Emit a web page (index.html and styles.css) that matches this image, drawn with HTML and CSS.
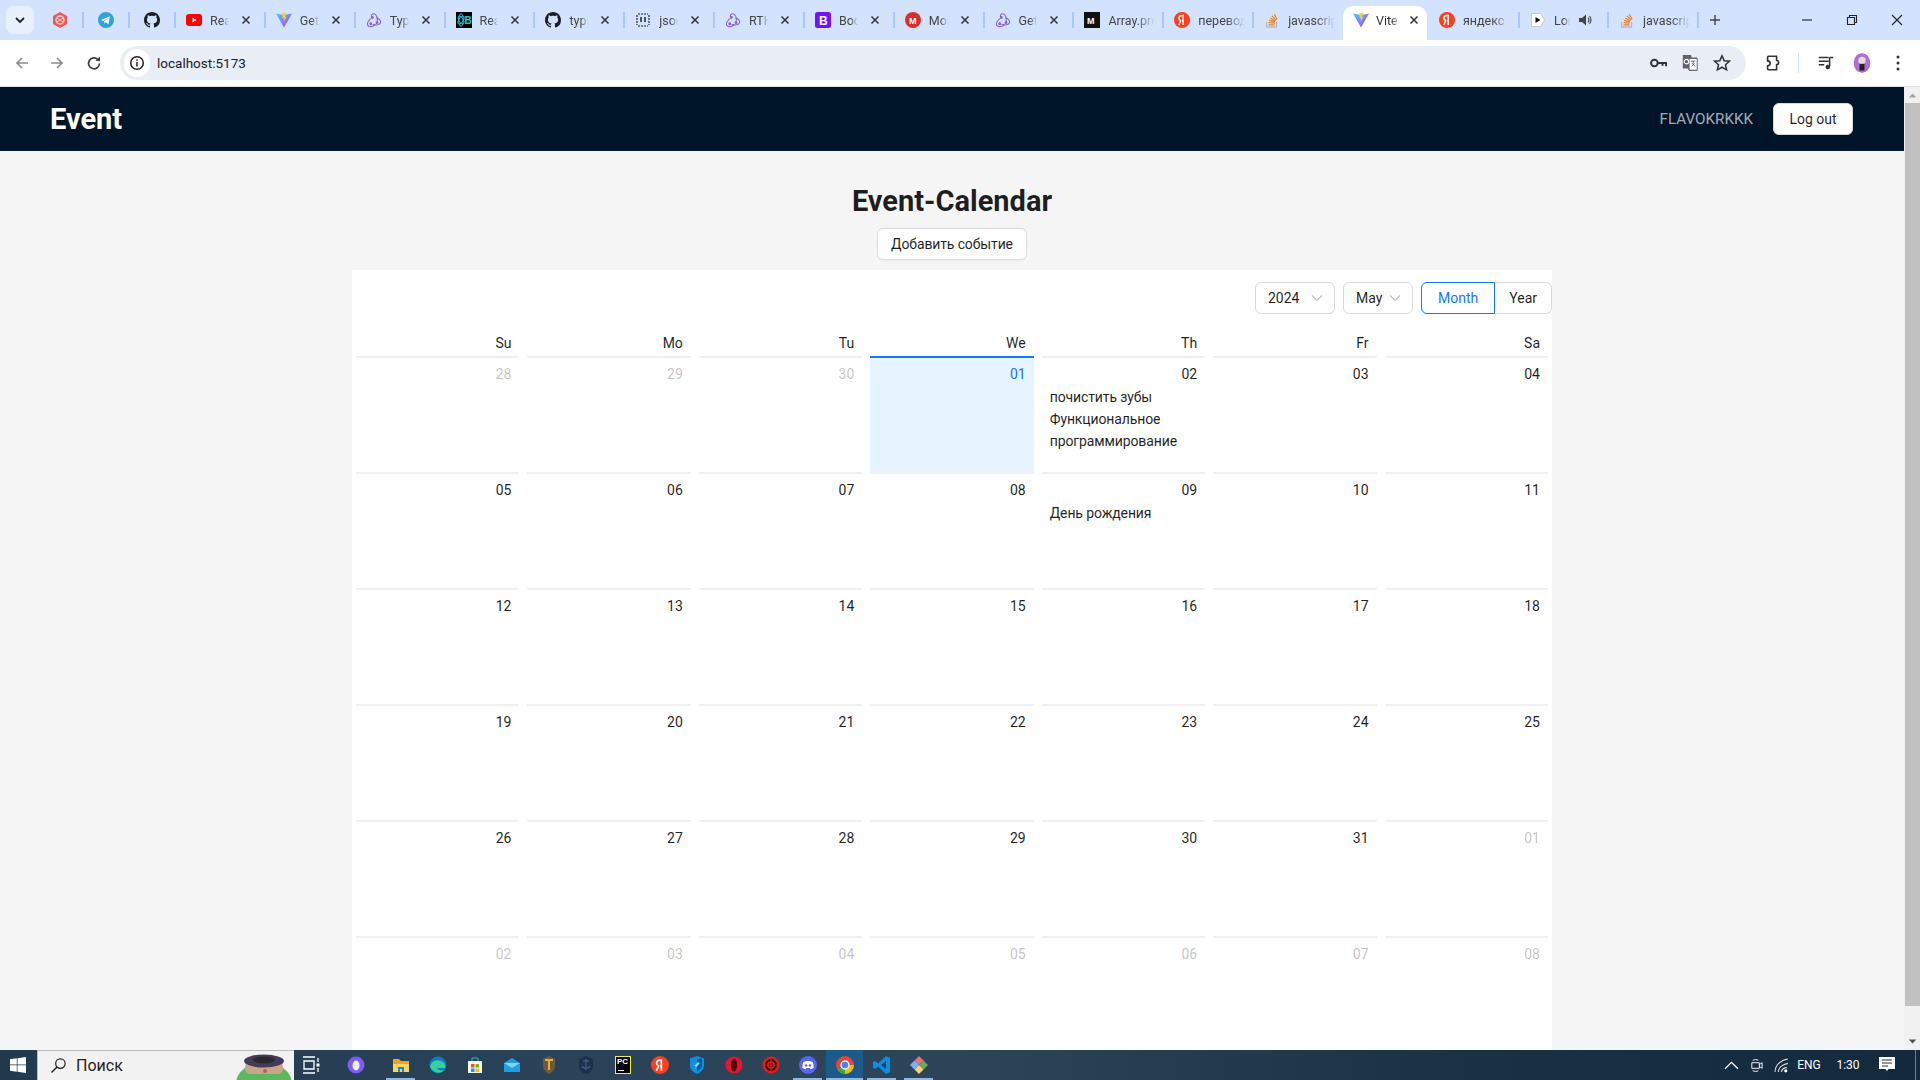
FILE: index.html
```html
<!DOCTYPE html>
<html lang="ru">
<head>
<meta charset="utf-8">
<title>Vite + React + TS</title>
<link rel="stylesheet" href="styles.css">
</head>
<body>
<svg class="defs" width="0" height="0" aria-hidden="true">
  <defs>
    <linearGradient id="vg" x1="0" y1="0" x2="1" y2="1"><stop offset="0" stop-color="#41d1ff"/><stop offset="1" stop-color="#bd34fe"/></linearGradient>
    <symbol id="x" viewBox="0 0 10 10"><path d="M1.5 1.5l7 7M8.5 1.5l-7 7" stroke="#333" stroke-width="1.5" fill="none"/></symbol>
    <symbol id="gh" viewBox="0 0 16 16"><path fill="#1b1f24" d="M8 0C3.58 0 0 3.58 0 8c0 3.54 2.29 6.53 5.47 7.59.4.07.55-.17.55-.38 0-.19-.01-.82-.01-1.49-2.01.37-2.53-.49-2.69-.94-.09-.23-.48-.94-.82-1.13-.28-.15-.68-.52-.01-.53.63-.01 1.08.58 1.23.82.72 1.21 1.87.87 2.33.66.07-.52.28-.87.51-1.07-1.78-.2-3.64-.89-3.64-3.95 0-.87.31-1.59.82-2.15-.08-.2-.36-1.02.08-2.12 0 0 .67-.21 2.2.82.64-.18 1.32-.27 2-.27.68 0 1.36.09 2 .27 1.53-1.04 2.2-.82 2.2-.82.44 1.1.16 1.92.08 2.12.51.56.82 1.27.82 2.15 0 3.07-1.87 3.75-3.65 3.95.29.25.54.73.54 1.48 0 1.07-.01 1.93-.01 2.2 0 .21.15.46.55.38A8.013 8.013 0 0016 8c0-4.42-3.58-8-8-8z"/></symbol>
    <symbol id="vite" viewBox="0 0 16 16"><path fill="url(#vg)" d="M0 1.5l8 1.5 8-1.5L8 15.5z"/><path fill="#ffd028" d="M10.5.2L6.2 1.2l.5 5.2 1.4-.4-.5 3.6 3-5-1.7.3z"/></symbol>
    <symbol id="redux" viewBox="0 0 16 16"><g fill="none" stroke="#8b63c9" stroke-width="1.1"><path d="M11.2 9.7C12 6.6 10.6 2 8 1.7 6 1.5 4.8 3.4 5.6 5.4"/><path d="M4.7 6.7C2.2 9.2 .6 11.7 1.8 13.4c1.3 1.9 5 1.6 7.6-.7"/><path d="M6.6 12.4c3 .9 6.8.7 7.8-1.4.9-2-1-4.8-4.2-5"/><circle cx="6.3" cy="5.5" r=".9" fill="#8b63c9"/><circle cx="4.7" cy="11.8" r=".9" fill="#8b63c9"/><circle cx="11" cy="10.7" r=".9" fill="#8b63c9"/></g></symbol>
    <symbol id="ya" viewBox="0 0 16 16"><circle cx="8" cy="8" r="8" fill="#fc3f1d"/><path d="M9.2 13V3.6H8C6.2 3.6 5 4.7 5 6.3c0 1.3.6 2 1.7 2.7L4.8 13M9.2 8.5H8" fill="none" stroke="#fff" stroke-width="1.5"/></symbol>
    <symbol id="so" viewBox="0 0 16 16"><path d="M2.5 10v5h10v-5" fill="none" stroke="#bcbbbb" stroke-width="1.3"/><path d="M4.5 12.8h6M4.6 10.600l6 .5M5.100 8.300l5.800 1.600M6.200 6l5.200 3M8 3.900l4.200 4.200M10.300 2.200l2.800 5" fill="none" stroke="#f48024" stroke-width="1.3"/></symbol>
  </defs>
</svg>
<div class="screen">
  <div class="tabstrip">
    <div class="tabs-menu"><svg width="10" height="7" viewBox="0 0 10 7"><path d="M1 1l4 4 4-4" fill="none" stroke="#222" stroke-width="1.8"/></svg></div>
    <div class="tab pin sep"><svg class="fav" viewBox="0 0 16 16"><path fill="#f05656" d="M8 0l7 4v8l-7 4-7-4V4z"/><circle cx="8" cy="8" r="4" fill="none" stroke="#fbdada" stroke-width="1.3"/><path d="M5 6l6 4M11 6l-6 4" stroke="#fbdada" stroke-width="1"/></svg></div>
    <div class="tab pin sep"><svg class="fav" viewBox="0 0 16 16"><circle cx="8" cy="8" r="8" fill="#2ea3dc"/><path fill="#fff" d="M3 8l9-3.7-1.500 8-2.700-2-1.300 1.300-.3-2.300 4-3.500-5 3.100z"/></svg></div>
    <div class="tab pin sep"><svg class="fav"><use href="#gh"/></svg></div>
    <div class="tab sep"><svg class="fav" viewBox="0 0 16 16"><rect y="2" width="16" height="12" rx="3" fill="#f00"/><path fill="#fff" d="M6.5 5.5v5l4-2.500z"/></svg><span class="tname">React</span><svg class="tx"><use href="#x"/></svg></div>
    <div class="tab sep"><svg class="fav"><use href="#vite"/></svg><span class="tname">Getting</span><svg class="tx"><use href="#x"/></svg></div>
    <div class="tab sep"><svg class="fav"><use href="#redux"/></svg><span class="tname">Typescript</span><svg class="tx"><use href="#x"/></svg></div>
    <div class="tab sep"><svg class="fav" viewBox="0 0 16 16"><rect width="16" height="16" fill="#000"/><g fill="none" stroke="#22c8d8" stroke-width=".9"><ellipse cx="5" cy="8" rx="2.2" ry="6.5"/><ellipse cx="5" cy="8" rx="4.5" ry="2.2" transform="rotate(60 5 8)"/><ellipse cx="5" cy="8" rx="4.5" ry="2.2" transform="rotate(-60 5 8)"/></g><text x="8.5" y="12" class="fav-b">B</text></svg><span class="tname">React</span><svg class="tx"><use href="#x"/></svg></div>
    <div class="tab sep"><svg class="fav"><use href="#gh"/></svg><span class="tname">typicode</span><svg class="tx"><use href="#x"/></svg></div>
    <div class="tab sep"><svg class="fav" viewBox="0 0 16 16"><path d="M3 2h10M3 14h10M2 3v10M14 3v10" stroke="#222" stroke-width="1.2" stroke-dasharray="2 1" fill="none"/><path d="M6 5v5M10 5v5" stroke="#222" stroke-width="1.5"/></svg><span class="tname">json</span><svg class="tx"><use href="#x"/></svg></div>
    <div class="tab sep"><svg class="fav"><use href="#redux"/></svg><span class="tname">RTK Query</span><svg class="tx"><use href="#x"/></svg></div>
    <div class="tab sep"><svg class="fav" viewBox="0 0 16 16"><rect width="16" height="16" rx="2.5" fill="#7611f7"/><text x="4" y="12.5" class="fav-w">B</text></svg><span class="tname">Bootstrap</span><svg class="tx"><use href="#x"/></svg></div>
    <div class="tab sep"><svg class="fav" viewBox="0 0 16 16"><circle cx="8" cy="8" r="8" fill="#dd2c2c"/><text x="4" y="11.5" class="fav-w small">M</text></svg><span class="tname">Mobx</span><svg class="tx"><use href="#x"/></svg></div>
    <div class="tab sep"><svg class="fav"><use href="#redux"/></svg><span class="tname">Getting</span><svg class="tx"><use href="#x"/></svg></div>
    <div class="tab sep wide"><svg class="fav" viewBox="0 0 16 16"><rect width="16" height="16" fill="#111"/><text x="3" y="12" class="fav-w small">M</text></svg><span class="tname">Array.prototype</span></div>
    <div class="tab sep wide"><svg class="fav"><use href="#ya"/></svg><span class="tname">перевод</span></div>
    <div class="tab wide"><svg class="fav"><use href="#so"/></svg><span class="tname">javascript</span></div>
    <div class="tab active"><svg class="fav"><use href="#vite"/></svg><span class="tname">Vite + React</span><svg class="tx"><use href="#x"/></svg></div>
    <div class="tab sep wide yandex"><svg class="fav"><use href="#ya"/></svg><span class="tname">яндекс</span></div>
    <div class="tab sep lone"><svg class="fav" viewBox="0 0 16 16"><path d="M1.5 1.5h9l4 6.500-4 6.500h-9z" fill="#fff" stroke="#c9c9c9"/><path d="M5.500 5v6l5-3z" fill="#111"/></svg><span class="tname">Lonely</span><svg class="tsound" viewBox="0 0 14 14"><path d="M1 5h3l4-3.5v11L4 9H1z" fill="#444"/><path d="M10 4.5c1.3 1.500 1.300 3.500 0 5M11.500 3c2 2.200 2 5.800 0 8" fill="none" stroke="#444" stroke-width="1.1"/></svg></div>
    <div class="tab sep wide"><svg class="fav"><use href="#so"/></svg><span class="tname">javascript</span></div>
    <svg class="newtab" viewBox="0 0 12 12"><path d="M6 1v10M1 6h10" stroke="#444" stroke-width="1.4"/></svg>
    <div class="winctl">
      <svg class="wc" viewBox="0 0 12 12"><path d="M1 6h10" stroke="#222" stroke-width="1.1"/></svg>
      <svg class="wc" viewBox="0 0 12 12"><path d="M1.5 3.5h7v7h-7zM3.5 3.5v-2h7v7h-2" fill="none" stroke="#222" stroke-width="1.1"/></svg>
      <svg class="wc" viewBox="0 0 12 12"><path d="M1 1l10 10M11 1L1 11" stroke="#222" stroke-width="1.1"/></svg>
    </div>
  </div>
  <div class="toolbar">
    <svg class="nav" viewBox="0 0 16 16"><path d="M14 8H3M8 3L3 8l5 5" fill="none" stroke="#8a8d91" stroke-width="1.7"/></svg>
    <svg class="nav" viewBox="0 0 16 16"><path d="M2 8h11M8 3l5 5-5 5" fill="none" stroke="#8a8d91" stroke-width="1.7"/></svg>
    <svg class="nav reload" viewBox="0 0 16 16"><path d="M13.500 8.500a5.500 5.500 0 1 1-1.600-4.100" fill="none" stroke="#3c4043" stroke-width="1.7"/><path d="M14 1.500V6H9.500z" fill="#3c4043"/></svg>
    <div class="omnibox">
      <div class="site-info"><svg width="16" height="16" viewBox="0 0 16 16"><circle cx="8" cy="8" r="6.300" fill="none" stroke="#222" stroke-width="1.5"/><path d="M8 7v4.500M8 4.300v1.500" stroke="#222" stroke-width="1.5"/></svg></div>
      <span class="url">localhost:5173</span>
      <svg class="omni-i" viewBox="0 0 20 20"><circle cx="6" cy="10" r="3.700" fill="none" stroke="#333" stroke-width="2.2"/><path d="M10 10h9v3.500M15 10v3" fill="none" stroke="#333" stroke-width="2.2"/></svg>
      <svg class="omni-i" viewBox="0 0 20 20"><path d="M2 1h9l1 3h6v15H9l-1-3H2z" fill="#5f6368"/><path d="M9 5h9v13H9z" fill="#fff" stroke="#5f6368"/><path d="M11 8h5M13.500 8v2M12 14l3-4M12 10l4 4" stroke="#5f6368" fill="none"/><circle cx="6" cy="8.500" r="2.500" fill="none" stroke="#fff" stroke-width="1.2"/></svg>
      <svg class="omni-i star" viewBox="0 0 20 20"><path d="M10 2l2.400 5.400 5.800.6-4.300 3.900 1.200 5.700-5.100-2.900-5.100 2.900 1.200-5.700L1.800 8l5.800-.6z" fill="none" stroke="#333" stroke-width="1.7"/></svg>
    </div>
    <svg class="tool ext" viewBox="0 0 20 20"><path d="M5 2.500h9v4.700a2.300 2.300 0 0 1 0 4.600v5.700H5c-.6 0-1-.4-1-1v-3.300a2.800 2.800 0 0 0 0-5.600V3.500c0-.6.400-1 1-1z" fill="none" stroke="#333" stroke-width="1.8"/></svg>
    <i class="tool-sep"></i>
    <svg class="tool media" viewBox="0 0 20 20"><path d="M2 4h11M2 8h11M2 12h6" stroke="#333" stroke-width="1.7"/><path d="M14 4h4M14 4v10" stroke="#333" stroke-width="1.7"/><circle cx="12" cy="14.500" r="2.500" fill="#333"/></svg>
    <svg class="avatar" viewBox="0 0 20 24"><ellipse cx="10" cy="12" rx="10" ry="12" fill="#b36bd8"/><circle cx="10" cy="9" r="4.500" fill="#ddd"/><rect x="7" y="13" width="6" height="8" fill="#222"/></svg>
    <svg class="kebab" viewBox="0 0 4 16"><circle cx="2" cy="2" r="1.500" fill="#333"/><circle cx="2" cy="8" r="1.500" fill="#333"/><circle cx="2" cy="14" r="1.500" fill="#333"/></svg>
  </div>
  <div class="viewport">
    <div class="page">
      <header class="appbar">
        <div class="brand">Event</div>
        <div class="user">FLAVOKRKKK</div>
        <button class="btn logout">Log out</button>
      </header>
      <main class="content">
        <h2 class="title">Event-Calendar</h2>
        <button class="btn add">Добавить событие</button>
        <section class="calendar">
          <div class="cal-head">
            <div class="select year">2024<svg class="caret" viewBox="0 0 12 12"><path d="M1 3.500l5 5 5-5" fill="none" stroke="#bfbfbf" stroke-width="1.1"/></svg></div>
            <div class="select month">May<svg class="caret" viewBox="0 0 12 12"><path d="M1 3.500l5 5 5-5" fill="none" stroke="#bfbfbf" stroke-width="1.1"/></svg></div>
            <div class="segment"><span class="seg on">Month</span><span class="seg">Year</span></div>
          </div>
          <div class="grid">
            <div class="dow">Su</div><div class="dow">Mo</div><div class="dow">Tu</div><div class="dow">We</div><div class="dow">Th</div><div class="dow">Fr</div><div class="dow">Sa</div>
            <div class="day out"><div class="num">28</div></div>
            <div class="day out"><div class="num">29</div></div>
            <div class="day out"><div class="num">30</div></div>
            <div class="day today"><div class="num">01</div></div>
            <div class="day"><div class="num">02</div><div class="ev">почистить зубы</div><div class="ev">Функциональное программирование</div></div>
            <div class="day"><div class="num">03</div></div>
            <div class="day"><div class="num">04</div></div>
            <div class="day"><div class="num">05</div></div>
            <div class="day"><div class="num">06</div></div>
            <div class="day"><div class="num">07</div></div>
            <div class="day"><div class="num">08</div></div>
            <div class="day"><div class="num">09</div><div class="ev">День рождения</div></div>
            <div class="day"><div class="num">10</div></div>
            <div class="day"><div class="num">11</div></div>
            <div class="day"><div class="num">12</div></div>
            <div class="day"><div class="num">13</div></div>
            <div class="day"><div class="num">14</div></div>
            <div class="day"><div class="num">15</div></div>
            <div class="day"><div class="num">16</div></div>
            <div class="day"><div class="num">17</div></div>
            <div class="day"><div class="num">18</div></div>
            <div class="day"><div class="num">19</div></div>
            <div class="day"><div class="num">20</div></div>
            <div class="day"><div class="num">21</div></div>
            <div class="day"><div class="num">22</div></div>
            <div class="day"><div class="num">23</div></div>
            <div class="day"><div class="num">24</div></div>
            <div class="day"><div class="num">25</div></div>
            <div class="day"><div class="num">26</div></div>
            <div class="day"><div class="num">27</div></div>
            <div class="day"><div class="num">28</div></div>
            <div class="day"><div class="num">29</div></div>
            <div class="day"><div class="num">30</div></div>
            <div class="day"><div class="num">31</div></div>
            <div class="day out"><div class="num">01</div></div>
            <div class="day out"><div class="num">02</div></div>
            <div class="day out"><div class="num">03</div></div>
            <div class="day out"><div class="num">04</div></div>
            <div class="day out"><div class="num">05</div></div>
            <div class="day out"><div class="num">06</div></div>
            <div class="day out"><div class="num">07</div></div>
            <div class="day out"><div class="num">08</div></div>
          </div>
        </section>
      </main>
    </div>
    <div class="scrollbar">
      <svg class="arrow" viewBox="0 0 10 6"><path d="M5 .5L9.500 5.500H.5z" fill="#a3a3a3"/></svg>
      <div class="thumb"></div>
      <svg class="arrow" viewBox="0 0 10 6"><path d="M5 5.500L.5 .5h9z" fill="#505050"/></svg>
    </div>
  </div>
  <footer class="taskbar">
    <svg class="win" viewBox="0 0 16 16"><path fill="#fff" d="M0 2.300l6.800-1v6.300H0zM7.500 1.200L16 0v7.600H7.500zM0 8.300h6.800v6.400l-6.800-1zM7.500 8.300H16V16l-8.500-1.200z"/></svg>
    <div class="search">
      <svg class="lens" viewBox="0 0 18 18"><circle cx="11" cy="7" r="5" fill="none" stroke="#222" stroke-width="1.3"/><path d="M7.500 10.500L1.500 16.500" stroke="#222" stroke-width="1.5"/></svg>
      <span class="search-t">Поиск</span>
      <svg class="deco" viewBox="0 0 58 26"><ellipse cx="30" cy="30" rx="28" ry="22" fill="#5cb85c"/><rect x="11" y="8" width="38" height="12" rx="5" fill="#c9a58a"/><ellipse cx="30" cy="7" rx="20" ry="6.500" fill="#453a5a"/><ellipse cx="30" cy="6" rx="11" ry="3.500" fill="#2a2a2e"/><circle cx="31" cy="17" r="2" fill="#d34a6a"/></svg>
    </div>
    <svg class="task taskview" viewBox="0 0 18 18"><path d="M1 1h12M1 17h12M2 5h10v8H2zM16 2v4M16 12v4" fill="none" stroke="#fff" stroke-width="1.3"/><rect x="14.500" y="7.500" width="3" height="3" fill="#fff"/></svg>
    <div class="pinned">
      <div class="task-i first"><svg class="task" viewBox="0 0 18 18"><circle cx="9" cy="9" r="8.500" fill="#7d5cf0"/><ellipse cx="9" cy="9.500" rx="3.500" ry="5" fill="#eee"/></svg></div>
      <div class="task-i run"><svg class="task" viewBox="0 0 18 18"><path d="M1 3h6l2 2h8v3H1z" fill="#e8a825"/><path d="M1 8h16v8H1z" fill="#ffd35c"/><path d="M6 16v-5h6v5h-2v-3H8v3z" fill="#1e88c9"/></svg></div>
      <div class="task-i"><svg class="task" viewBox="0 0 18 18"><circle cx="9" cy="9" r="8.500" fill="#0e7ec4"/><path d="M1 11c1-5 6-8 11-6 3 1 5 4 4 7H8c1 2 4 3 7 2-3 4-10 4-14-3z" fill="#35d29a"/></svg></div>
      <div class="task-i"><svg class="task" viewBox="0 0 18 18"><path d="M2 5h14v12H2z" fill="#f4f4f4"/><path d="M6 5V2h6v3" fill="none" stroke="#3ab0e0"/><path d="M5 8h3.500v3.500H5z" fill="#f25022"/><path d="M9.500 8H13v3.500H9.500z" fill="#7fba00"/><path d="M5 12.500h3.500V16H5z" fill="#00a4ef"/><path d="M9.500 12.500H13V16H9.500z" fill="#ffb900"/></svg></div>
      <div class="task-i"><svg class="task" viewBox="0 0 18 18"><path d="M1 7l8-5 8 5v9H1z" fill="#1d9ee0"/><path d="M1 7l8 5 8-5" fill="#7fd3f7"/></svg></div>
      <div class="task-i"><svg class="task" viewBox="0 0 18 18"><path d="M9 0l6 3v7c0 4-3 6-6 8-3-2-6-4-6-8V3z" fill="#6d5a3a"/><path d="M5 3h8v2h-3v9H8V5H5z" fill="#e0b040"/></svg></div>
      <div class="task-i"><svg class="task" viewBox="0 0 18 18"><path d="M9 0l7 3v8c0 3-4 6-7 7-3-1-7-4-7-7V3z" fill="#1d2f4a"/><path d="M9 3v11M6 5h6M5 10c1 3 7 3 8 0" stroke="#3e5c85" fill="none" stroke-width="1.4"/></svg></div>
      <div class="task-i"><div class="pc">PC<i></i></div></div>
      <div class="task-i"><svg class="task"><use href="#ya"/></svg></div>
      <div class="task-i"><svg class="task" viewBox="0 0 18 18"><path d="M9 0l7 2.500v7c0 4-3 6.500-7 8.500-4-2-7-4.500-7-8.500v-7z" fill="#0f8fe0"/><path d="M9 3.500L14 2v7c0 3-2.500 5-5 6.500z" fill="#0a5f9c"/><path d="M12 4L6 10l2 .5L7 13l5-6-2-.5z" fill="#7fd4ff"/></svg></div>
      <div class="task-i"><svg class="task" viewBox="0 0 18 18"><circle cx="9" cy="9" r="8.500" fill="#e3182d"/><ellipse cx="9" cy="9" rx="3.200" ry="6.500" fill="#4a0a10"/></svg></div>
      <div class="task-i"><svg class="task" viewBox="0 0 18 18"><circle cx="9" cy="9" r="8.500" fill="#e31c1c"/><circle cx="9" cy="9" r="6" fill="#2a0808"/><circle cx="9" cy="9" r="3" fill="none" stroke="#e31c1c" stroke-width="1.5"/><path d="M9 3v12M3 9h12" stroke="#e31c1c" stroke-width="1.2"/></svg></div>
      <div class="task-i run"><svg class="task" viewBox="0 0 18 18"><circle cx="9" cy="9" r="9" fill="#5865f2"/><path d="M4.500 6c3-1.500 6-1.500 9 0 1 2 1.300 4 1 6-1 .7-2 1-3 1.300l-.7-1.200H7.200l-.7 1.200c-1-.3-2-.6-3-1.300-.3-2 0-4 1-6z" fill="#fff"/><circle cx="7" cy="9.500" r="1.200" fill="#5865f2"/><circle cx="11" cy="9.500" r="1.200" fill="#5865f2"/></svg></div>
      <div class="task-i run focus"><svg class="task" viewBox="0 0 18 18"><circle cx="9" cy="9" r="9" fill="#ea4335"/><path d="M9 9L1.200 13.500A9 9 0 0 0 9 18z" fill="#34a853"/><path d="M9 9h9a9 9 0 0 1-9 9z" fill="#fbbc05"/><circle cx="9" cy="9" r="4" fill="#4285f4" stroke="#fff" stroke-width="1.3"/></svg></div>
      <div class="task-i run"><svg class="task" viewBox="0 0 18 18"><path d="M13 0l4 2v14l-4 2L5 10.500 2 13l-2-1V6l2-1 3 2.500z" fill="#0e8ee0"/><path d="M13 5L8 9l5 4z" fill="#2a4054"/></svg></div>
      <div class="task-i run"><svg class="task" viewBox="0 0 18 18"><path d="M9 0l4.500 4.500L9 9 4.500 4.500z" fill="#e57373"/><path d="M0 9l4.500-4.500L9 9l-4.500 4.500z" fill="#7db2f0"/><path d="M9 9l4.500-4.500L18 9l-4.500 4.500z" fill="#6da85e"/><path d="M9 9l4.500 4.500L9 18l-4.500-4.500z" fill="#f3d470"/></svg></div>
    </div>
    <div class="tray">
      <svg class="tr" viewBox="0 0 14 14"><path d="M1 10l6-6 6 6" fill="none" stroke="#fff" stroke-width="1.2"/></svg>
      <svg class="tr" viewBox="0 0 14 16"><path d="M2 5h8v6H2zM10 7l3-2v6l-3-2M3 2.500c2-1 4-1 6 0M3 13.500c2 1 4 1 6 0" fill="none" stroke="#fff" stroke-width="1"/></svg>
      <svg class="tr" viewBox="0 0 14 14"><path d="M1 13C1 7 6 2 13 1M4 13c0-4 4-7 9-8M7 13c0-2 2-4 5-4" fill="none" stroke="#ddd" stroke-width="1"/><circle cx="11" cy="12" r="1.500" fill="#fff"/></svg>
      <span class="lang">ENG</span>
      <span class="clock">1:30</span>
      <svg class="note" viewBox="0 0 16 16"><path d="M0 0h16v12H9.500L8 14l-1.500-2H0z" fill="#fff"/><path d="M3 3h10M3 6h10M3 9h6" stroke="#1c3549" stroke-width="1"/></svg>
      <i class="desk"></i>
    </div>
  </footer>
</div>
</body>
</html>
```
FILE: styles.css
```css
* { box-sizing: border-box; }
html, body { margin: 0; height: 100%; overflow: hidden; }
body { font-family: Roboto, "Noto Sans", sans-serif; font-size: 14px; color: rgba(0,0,0,.88); }
.defs { position: absolute; }
.screen { width: 1920px; height: 1080px; display: flex; flex-direction: column; }

.tabstrip { height: 40px; flex: none; background: #d3e3fd; display: flex; align-items: center; padding-left: 6px; }
.tabs-menu { width: 28px; height: 28px; margin-right: 3px; border-radius: 8px; background: #e8f0fe; display: flex; align-items: center; justify-content: center; }
.tab { height: 40px; width: 89.85px; flex: none; display: flex; align-items: center; position: relative; padding-left: 11px; font-size: 12.5px; color: #444; }
.tab.pin { width: 46px; padding-left: 15px; }
.tab.sep::after { content: ""; position: absolute; right: -1px; top: 12px; height: 16px; width: 2px; background: #a8c7fa; }
.fav { width: 16px; height: 16px; flex: none; margin-right: 8px; }
.pin .fav { margin: 0; }
.tname { flex: 1; min-width: 0; white-space: nowrap; overflow: hidden; -webkit-mask-image: linear-gradient(90deg,#000 60%,transparent); mask-image: linear-gradient(90deg,#000 60%,transparent); }
.tx { width: 10px; height: 10px; flex: none; margin: 0 14px 0 12px; }
.wide .tname { margin-right: 8px; }
.tab.active { width: 84px; height: 34px; padding-bottom: 6px; background: #fff; border-radius: 10px 10px 0 0; align-self: flex-end; color: #333; padding-left: 10px; }
.tab.active .fav { margin-right: 7px; }
.tab.active .tx { margin: 0 8px 0 8px; }
.tab.yandex { width: 92px; padding-left: 12px; }
.tab.lone { width: 89px; }
.tsound { width: 14px; height: 14px; flex: none; margin: 0 16px 0 8px; }
.fav-b { font: bold 10px "Liberation Sans", sans-serif; fill: #22c8d8; }
.fav-w { font: bold 12px "Liberation Sans", sans-serif; fill: #fff; }
.fav-w.small { font-size: 9px; }
.newtab { width: 12px; height: 12px; flex: none; margin-left: 11px; }
.winctl { margin-left: auto; display: flex; gap: 33px; padding-right: 17px; }
.wc { width: 12px; height: 12px; }

.toolbar { height: 47px; flex: none; background: #fff; display: flex; align-items: center; padding: 0 0 1px 14px; border-radius: 8px 8px 0 0; border-bottom: 1px solid #e3e3e3; }
.nav { width: 16px; height: 16px; margin-right: 19px; flex: none; }
.nav.reload { margin-left: 2px; margin-right: 18px; }
.omnibox { width: 1626px; height: 34px; border-radius: 17px; background: #e9edf6; display: flex; align-items: center; padding: 0 15px 0 4px; flex: none; }
.site-info { width: 26px; height: 28px; border-radius: 14px; background: #fff; display: flex; align-items: center; justify-content: center; margin-right: 7px; }
.url { font-size: 13.5px; color: #202124; flex: 1; }
.omni-i { width: 18px; height: 18px; margin-left: 14px; }
.tool { width: 18px; height: 18px; flex: none; }
.tool.ext { margin-left: 18px; }
.tool-sep { width: 1px; height: 20px; background: #cfe0fb; margin: 0 18px 0 16px; }
.avatar { width: 20px; height: 20px; border-radius: 50%; margin-left: 17px; flex: none; }
.kebab { width: 4px; height: 16px; margin-left: 24px; flex: none; }

.viewport { flex: 1; min-height: 0; display: flex; }
.page { flex: 1; min-width: 0; overflow: hidden; background: #f5f5f5; }
.appbar { height: 64px; background: #001529; display: flex; align-items: center; padding: 0 51px 0 50px; }
.brand { color: #fff; font-weight: 700; font-size: 29px; margin-right: auto; }
.user { color: rgba(255,255,255,.65); font-size: 15.2px; margin-right: 20px; }
.btn { height: 32px; padding: 0 15px; border: 1px solid #d9d9d9; border-radius: 6px; background: #fff; font: inherit; color: rgba(0,0,0,.88); box-shadow: 0 2px 0 rgba(0,0,0,.02); }
.logout { width: 80px; padding: 0; }
.content { display: flex; flex-direction: column; align-items: center; padding-top: 31px; }
.title { margin: 0 0 7px; font-size: 29px; line-height: 39px; font-weight: 700; color: rgba(0,0,0,.88); }
.btn.add { width: 150px; padding: 0; flex: none; letter-spacing: -.13px; }
.calendar { width: 1200px; background: #fff; margin-top: 10px; flex: none; }
.cal-head { display: flex; justify-content: flex-end; padding: 12px 0; gap: 8px; }
.select { height: 32px; border: 1px solid #d9d9d9; border-radius: 6px; display: flex; align-items: center; justify-content: space-between; padding: 0 11px 0 12px; background: #fff; }
.select.year { width: 80px; }
.select.month { width: 70px; }
.caret { width: 12px; height: 12px; }
.segment { display: flex; width: 131px; height: 32px; }
.seg { display: flex; align-items: center; justify-content: center; border: 1px solid #d9d9d9; border-left: 0; border-radius: 0 6px 6px 0; flex: 57; }
.seg.on { flex: 74; color: #1677ff; border: 1px solid #1677ff; border-radius: 6px 0 0 6px; }
.grid { display: grid; grid-template-columns: repeat(7, 1fr); }
.dow { height: 30px; text-align: right; padding: 6px 12px 2px 0; line-height: 22px; }
.day { height: 116px; margin: 0 4px; padding: 4px 8px 0; border-top: 2px solid #f0f0f0; }
.num { line-height: 22px; text-align: right; position: relative; top: 1px; }
.ev { line-height: 22px; position: relative; top: 2px; letter-spacing: -.12px; }
.out .num { color: rgba(0,0,0,.25); }
.today { background: #e6f4ff; border-top-color: #1677ff; }
.today .num { color: #1677ff; }

.scrollbar { width: 16px; flex: none; background: #f1f1f1; display: flex; flex-direction: column; align-items: center; }
.arrow { width: 9px; height: 5px; flex: none; margin: 6px 0; }
.thumb { width: 15px; height: 903px; background: #c1c1c1; margin-top: -1px; margin-bottom: auto; flex: none; }

.taskbar { height: 30px; flex: none; display: flex; align-items: center; background: linear-gradient(90deg,#22394e 0%,#2b4358 30%,#2d4559 50%,#1a3146 75%,#14293c 100%); color: #fff; position: relative; }
.win { width: 16px; height: 16px; margin: 0 11px 0 10px; flex: none; }
.search { width: 257px; height: 30px; flex: none; background: #f2f2f2; border-top: 1px solid #bdbdbd; border-left: 1px solid #bdbdbd; display: flex; align-items: center; padding-left: 12px; overflow: hidden; position: relative; }
.lens { width: 17px; height: 17px; flex: none; }
.search-t { margin-left: 9px; font-size: 16px; color: #222; }
.deco { position: absolute; right: 2px; bottom: 0; width: 58px; height: 26px; }
.task { width: 18px; height: 18px; flex: none; display: block; }
.taskview { margin-left: 8px; margin-right: 17px; }
.pinned { display: flex; align-items: center; height: 30px; }
.task-i { width: 37px; height: 30px; display: flex; align-items: center; justify-content: center; position: relative; flex: none; }
.task-i.first { margin-right: 8px; }
.task-i.run::after { content: ""; position: absolute; left: 4px; right: 4px; bottom: 0; height: 2px; background: #8fb9dc; }
.task-i.focus { background: #1c5a8c; }
.task-i.focus::after { left: 0; right: 0; }
.pc { width: 16px; height: 18px; background: #000; border: 1px solid #f4ee3a; color: #fff; font: bold 8px/10px "Liberation Sans", sans-serif; text-align: center; position: relative; }
.pc i { position: absolute; left: 2px; bottom: 2px; width: 6px; height: 1px; background: #fff; }
.tray { margin-left: auto; display: flex; align-items: center; height: 30px; }
.tr { width: 15px; height: 15px; margin-right: 10px; flex: none; }
.lang { font-size: 12px; width: 36px; text-align: center; margin-left: -7.5px; }
.clock { font-size: 12px; width: 34px; text-align: center; margin-left: 4px; }
.note { width: 16px; height: 16px; margin-left: 14px; flex: none; }
.desk { width: 1px; height: 30px; background: #6d7f8e; margin-left: 20px; margin-right: 4px; }
```
